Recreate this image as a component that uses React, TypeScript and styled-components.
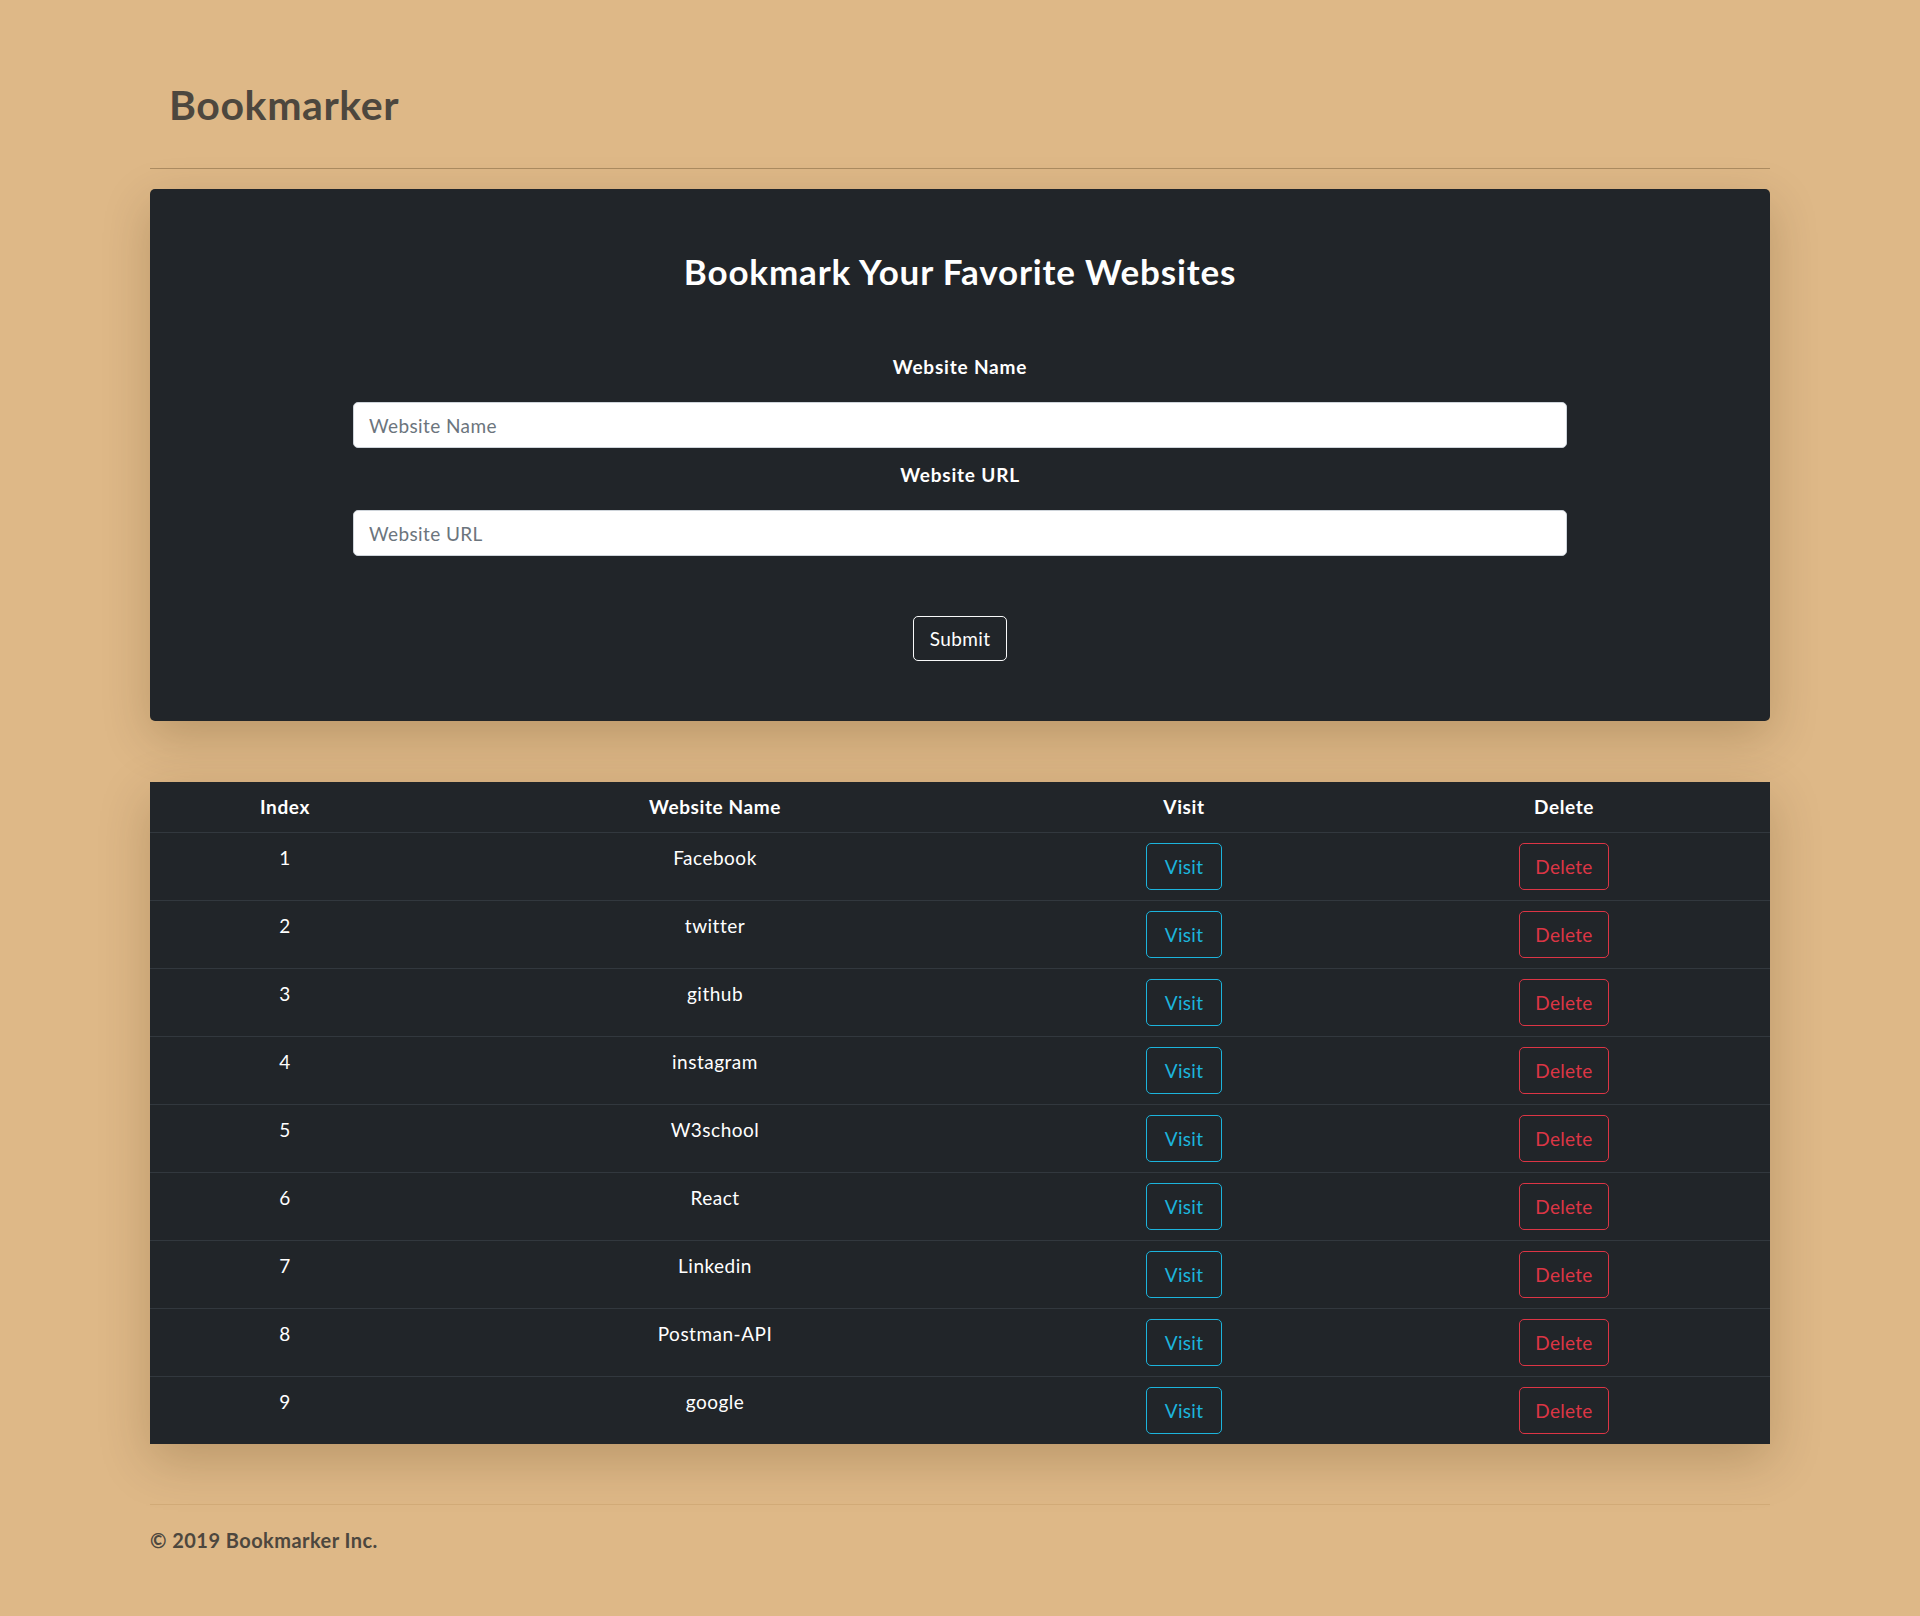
import React from "react";
import styled, { createGlobalStyle } from "styled-components";

const GlobalStyle = createGlobalStyle`
  html, body {
    margin: 0;
    padding: 0;
    background: #deb887;
  }
  body {
    font-family: Lato, "Open Sans", "Noto Sans", sans-serif;
    font-size: 19px;
    line-height: 1.5;
    color: #212529;
  }
  * { box-sizing: border-box; }
`;

const Page = styled.div`
  width: 1620px;
  margin: 0 auto;
  padding-bottom: 46px;
`;

const Header = styled.header`
  padding: 80px 0 0 19px;
  height: 169px;
  border-bottom: 1px solid rgba(60, 40, 10, 0.3);
`;

const Brand = styled.h3`
  margin: 0;
  font-size: 41px;
  line-height: 49px;
  letter-spacing: 0.6px;
  font-weight: 700;
  color: #4d473e;
`;

const Jumbo = styled.section`
  margin-top: 20px;
  background: #212529;
  border-radius: 5px;
  padding: 62px 0 60px;
  display: flex;
  flex-direction: column;
  align-items: center;
  box-shadow: 0 16px 48px rgba(60, 35, 0, 0.22);
`;

const Title = styled.h2`
  margin: 0 0 61px;
  font-size: 35px;
  line-height: 41px;
  letter-spacing: 0.85px;
  font-weight: 700;
  color: #fff;
`;

const Form = styled.form`
  width: 1214px;
  display: flex;
  flex-direction: column;
  align-items: center;
`;

const Label = styled.label<{ $gap?: number }>`
  display: block;
  margin-top: ${(p) => p.$gap ?? 0}px;
  margin-bottom: 21px;
  font-size: 19px;
  line-height: 28px;
  letter-spacing: 0.8px;
  font-weight: 700;
  color: #fff;
`;

const Input = styled.input`
  width: 100%;
  height: 46px;
  padding: 0 15px;
  border: 1px solid #ced4da;
  border-radius: 5px;
  background: #fff;
  font-family: inherit;
  font-size: 19px;
  letter-spacing: 0.4px;
  color: #495057;
  outline: none;
  &::placeholder {
    color: #6c757d;
  }
`;

const SubmitButton = styled.button`
  margin-top: 60px;
  height: 45px;
  padding: 0 16px;
  background: transparent;
  border: 1px solid #f8f9fa;
  border-radius: 5px;
  color: #fff;
  font-family: inherit;
  font-size: 19px;
  letter-spacing: 0.4px;
  cursor: pointer;
`;

const TableWrap = styled.div`
  margin-top: 61px;
  box-shadow: 0 16px 48px rgba(60, 35, 0, 0.22);
`;

const Table = styled.table`
  width: 100%;
  border-collapse: collapse;
  table-layout: fixed;
  background: #212529;
  color: #fff;
`;

const Th = styled.th`
  padding: 10px 0;
  font-size: 19px;
  line-height: 30px;
  letter-spacing: 0.6px;
  font-weight: 700;
  text-align: center;
`;

const Row = styled.tr`
  border-top: 1px solid #32383e;
`;

const Td = styled.td`
  padding: 10px 0;
  font-size: 19px;
  line-height: 30px;
  letter-spacing: 0.5px;
  text-align: center;
  vertical-align: top;
`;

const OutlineButton = styled.button<{ $tone: string; $pad: number }>`
  height: 47px;
  padding: 0 ${(p) => p.$pad}px;
  background: transparent;
  border: 1px solid ${(p) => p.$tone};
  border-radius: 5px;
  color: ${(p) => p.$tone};
  font-family: inherit;
  font-size: 19px;
  letter-spacing: 0.3px;
  cursor: pointer;
`;

const Footer = styled.footer`
  margin-top: 60px;
  border-top: 1px solid rgba(120, 80, 20, 0.12);
  padding-top: 20px;
  font-size: 20px;
  line-height: 30px;
  letter-spacing: 0.45px;
  font-weight: 700;
  color: #4d473e;
`;

const sites = [
  "Facebook",
  "twitter",
  "github",
  "instagram",
  "W3school",
  "React",
  "Linkedin",
  "Postman-API",
  "google",
];

export default function App() {
  return (
    <>
      <GlobalStyle />
      <Page>
        <Header>
          <Brand>Bookmarker</Brand>
        </Header>

        <Jumbo>
          <Title>Bookmark Your Favorite Websites</Title>
          <Form onSubmit={(e) => e.preventDefault()}>
            <Label htmlFor="siteName">Website Name</Label>
            <Input id="siteName" type="text" placeholder="Website Name" />
            <Label htmlFor="siteUrl" $gap={13}>
              Website URL
            </Label>
            <Input id="siteUrl" type="text" placeholder="Website URL" />
            <SubmitButton type="submit">Submit</SubmitButton>
          </Form>
        </Jumbo>

        <TableWrap>
          <Table>
            <colgroup>
              <col style={{ width: 270 }} />
              <col style={{ width: 590 }} />
              <col style={{ width: 348 }} />
              <col style={{ width: 412 }} />
            </colgroup>
            <thead>
              <tr>
                <Th>Index</Th>
                <Th>Website Name</Th>
                <Th>Visit</Th>
                <Th>Delete</Th>
              </tr>
            </thead>
            <tbody>
              {sites.map((s, i) => (
                <Row key={s}>
                  <Td>{i + 1}</Td>
                  <Td>{s}</Td>
                  <Td>
                    <OutlineButton $tone="#1cb4dc" $pad={18}>
                      Visit
                    </OutlineButton>
                  </Td>
                  <Td>
                    <OutlineButton $tone="#dc3545" $pad={15}>
                      Delete
                    </OutlineButton>
                  </Td>
                </Row>
              ))}
            </tbody>
          </Table>
        </TableWrap>

        <Footer>© 2019 Bookmarker Inc.</Footer>
      </Page>
    </>
  );
}
